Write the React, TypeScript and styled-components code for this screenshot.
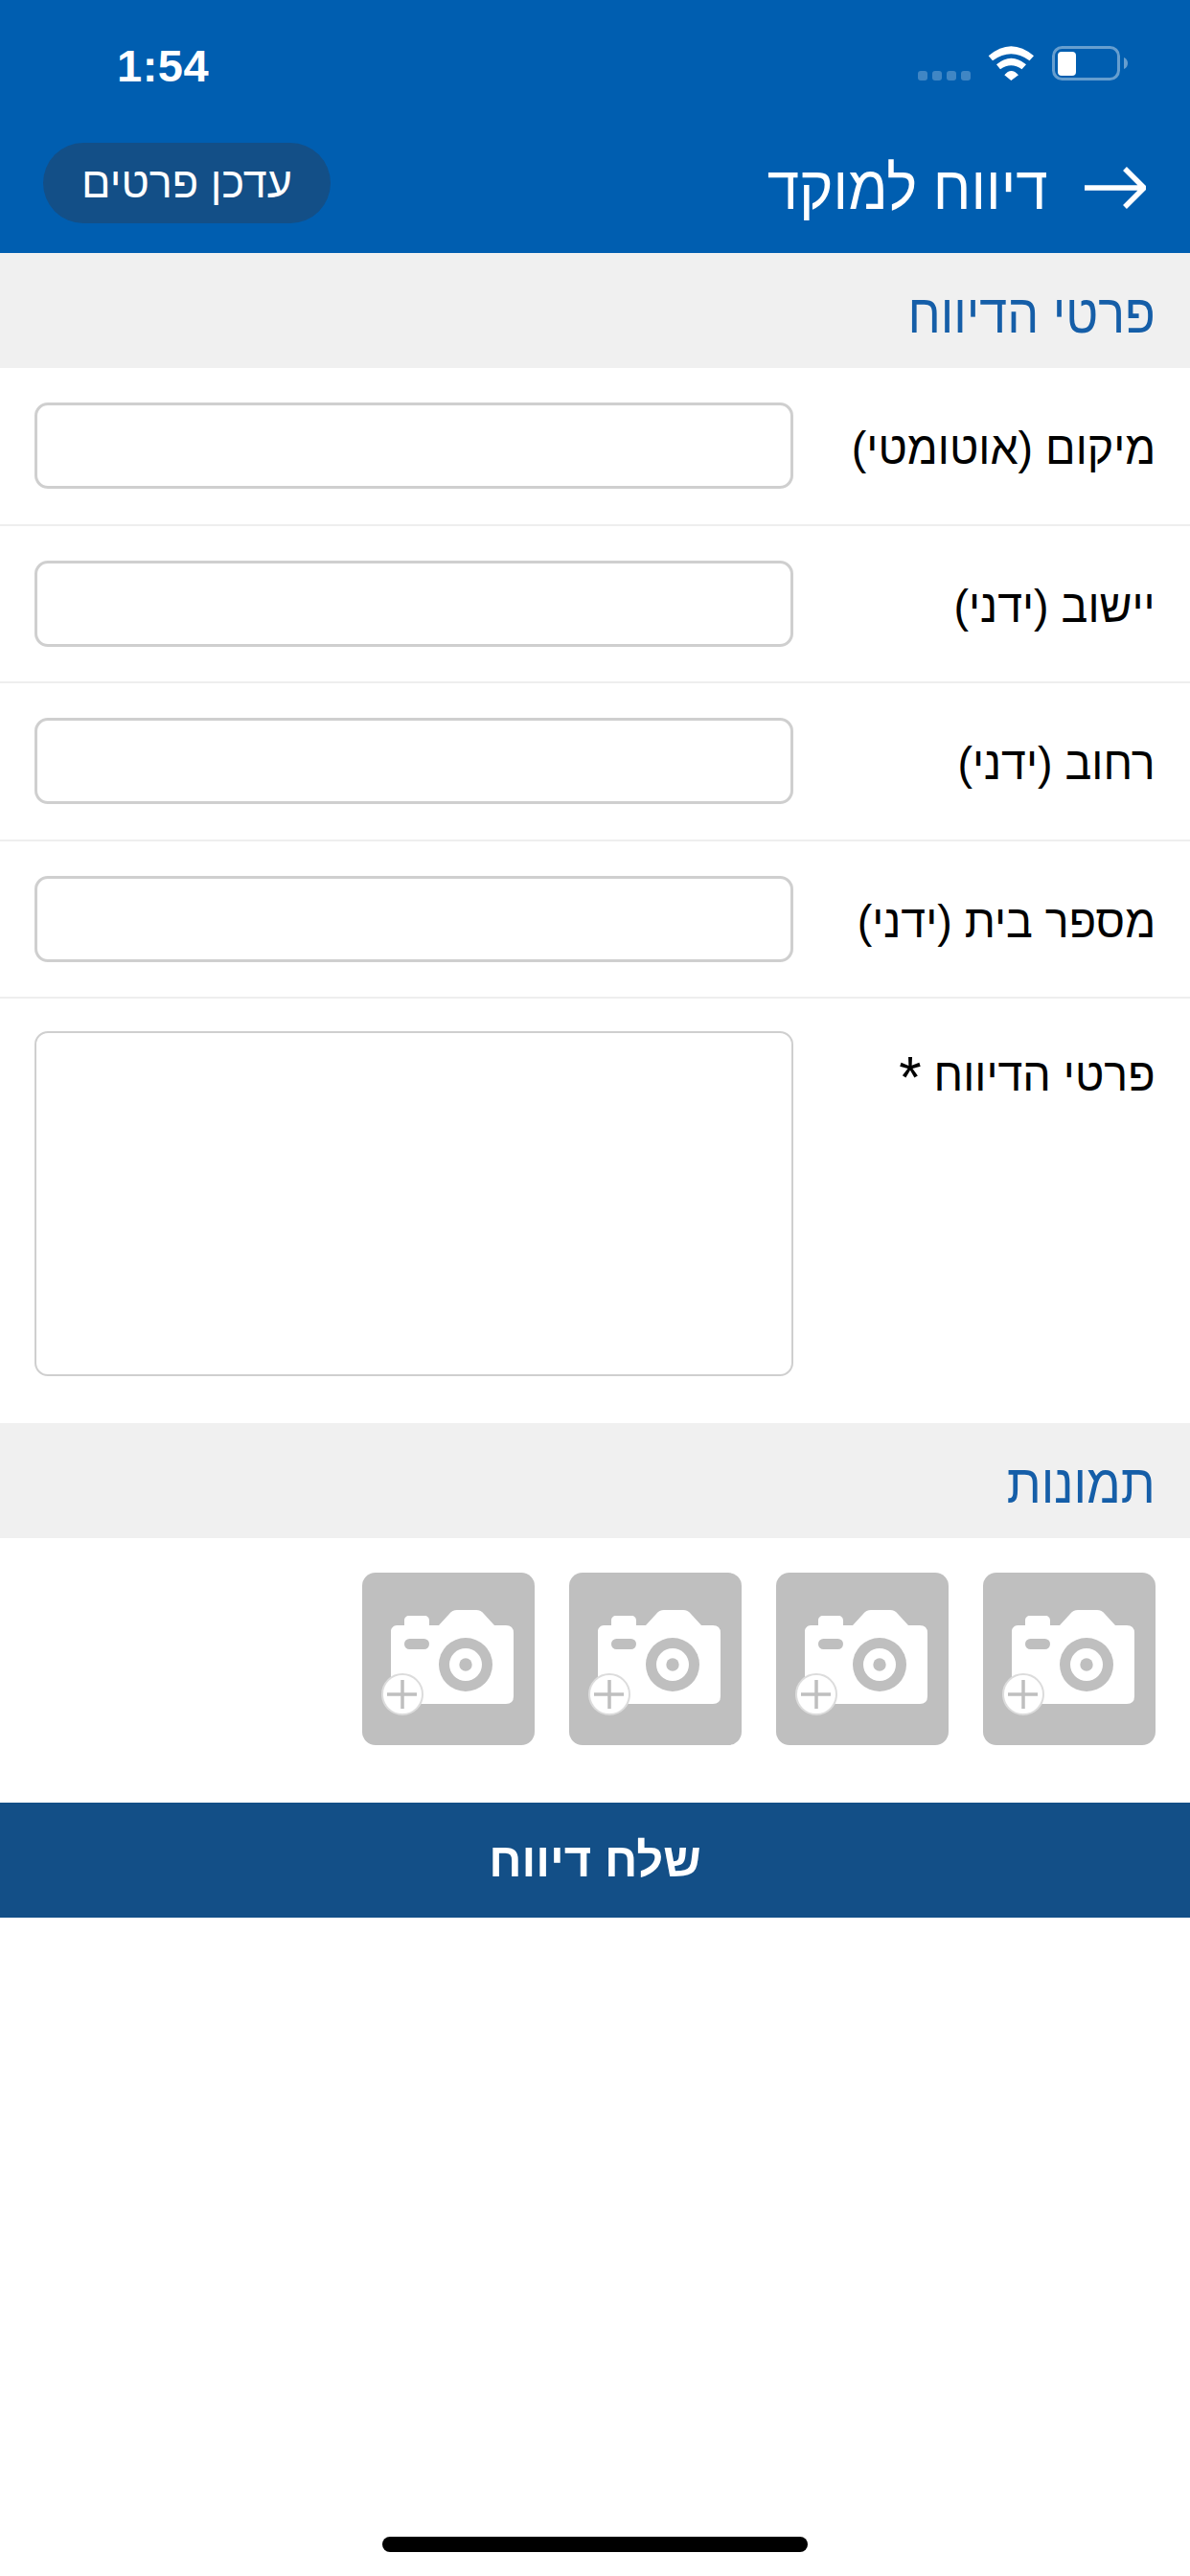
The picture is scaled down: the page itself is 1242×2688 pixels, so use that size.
import React from "react";
import styled, { createGlobalStyle } from "styled-components";

const GlobalStyle = createGlobalStyle`
  html, body {
    margin: 0;
    padding: 0;
    background: #fff;
    font-family: "Liberation Sans", "Noto Sans", sans-serif;
  }
`;

const Page = styled.div`
  position: relative;
  width: 1242px;
  height: 2688px;
  background: #fff;
  overflow: hidden;
`;

const Header = styled.header`
  height: 264px;
  box-sizing: border-box;
  background: #005eb0;
  display: flex;
  flex-direction: column;
`;

const StatusBar = styled.div`
  height: 132px;
  box-sizing: border-box;
  padding: 0 60px 0 122px;
  display: flex;
  align-items: center;
  justify-content: space-between;
  color: #fff;
`;

const Time = styled.div`
  font-size: 47px;
  font-weight: 700;
  letter-spacing: 0.5px;
  margin-top: 4px;
`;

const StatusIcons = styled.div`
  display: flex;
  align-items: center;
`;

const TitleBar = styled.div`
  direction: rtl;
  height: 132px;
  box-sizing: border-box;
  padding: 0 46px 14px 45px;
  display: flex;
  align-items: center;
  justify-content: space-between;
`;

const TitleGroup = styled.div`
  display: flex;
  align-items: center;
  gap: 38px;
  margin-top: 10px;
`;

const Title = styled.h1`
  margin: 0;
  font-size: 64px;
  font-weight: 400;
  color: #fff;
  transform: scaleX(0.94);
  transform-origin: right center;
`;

const UpdateButton = styled.button`
  height: 84px;
  width: 300px;
  border: 0;
  border-radius: 42px;
  background: #134f87;
  color: #fff;
  font-family: inherit;
  font-size: 45px;
  padding: 0;
`;

const SectionHeader = styled.h2`
  direction: rtl;
  margin: 0;
  height: 120px;
  box-sizing: border-box;
  padding: 6px 36px 0;
  display: flex;
  align-items: center;
  background: #f0f0f0;
  color: #155ea8;
  font-size: 56px;
  font-weight: 400;
`;

const SectionText = styled.span`
  transform: scaleX(0.93);
  transform-origin: right center;
`;

const Row = styled.div<{ $tall?: boolean }>`
  direction: rtl;
  box-sizing: border-box;
  padding: ${(p) => (p.$tall ? "34px 36px 48px" : "36px")};
  height: ${(p) => (p.$tall ? "443px" : "164.5px")};
  display: flex;
  justify-content: space-between;
  align-items: ${(p) => (p.$tall ? "flex-start" : "center")};
  border-bottom: ${(p) => (p.$tall ? "0" : "2px solid #eeeeee")};
`;

const Label = styled.label<{ $top?: boolean }>`
  font-size: 48px;
  color: #000;
  line-height: 90px;
  margin-top: ${(p) => (p.$top ? "1px" : "6px")};
  transform: scaleX(0.97);
  transform-origin: right center;
`;

const Required = styled.span`
  font-size: 62px;
  line-height: 0;
  vertical-align: -7px;
`;

const TextInput = styled.div`
  width: 792px;
  height: 90px;
  box-sizing: border-box;
  border: 3px solid #cfcfcf;
  border-radius: 14px;
  background: #fff;
`;

const TextArea = styled(TextInput)`
  height: 360px;
  border-width: 2px;
`;

const Photos = styled.div`
  direction: rtl;
  display: flex;
  gap: 36px;
  padding: 36px;
  height: 276px;
  box-sizing: border-box;
`;

const PhotoTile = styled.div`
  width: 180px;
  height: 180px;
  border-radius: 14px;
  background: #bfbfbf;
  display: flex;
  align-items: center;
  justify-content: center;
`;

const SendButton = styled.button`
  display: block;
  width: 100%;
  height: 120px;
  border: 0;
  background: #134f87;
  color: #fff;
  font-family: inherit;
  font-size: 49px;
  font-weight: 700;
`;

const HomeIndicator = styled.div`
  position: absolute;
  left: 399px;
  bottom: 25px;
  width: 444px;
  height: 16px;
  border-radius: 8px;
  background: #000;
`;

function StatusGlyphs() {
  return (
    <svg width="224" height="42" viewBox="0 0 224 42">
      <g fill="#fff" fillOpacity="0.25">
        <rect x="0" y="29" width="10" height="10" rx="3" />
        <rect x="15" y="29" width="10" height="10" rx="3" />
        <rect x="30" y="29" width="10" height="10" rx="3" />
        <rect x="45" y="29" width="10" height="10" rx="3" />
      </g>
      <path
        fill="#fff"
        d="M73.7 13.3Q97.3 -6.7 121 13.3L116.5 18.3Q97.3 4.3 78 18.3ZM82 22.3Q97.3 9.1 113 22.3L108.5 27.3Q97.3 19.3 86 27.3ZM90.3 33.3Q97.3 24.7 105 33.3L97.3 39Z"
      />
      <rect x="141.5" y="4.5" width="68" height="33" rx="9" fill="none" stroke="#fff" strokeOpacity="0.4" strokeWidth="3" />
      <rect x="146" y="9" width="19" height="25" rx="4" fill="#fff" />
      <path d="M215 15c3 1 4 4 4 6s-1 5-4 6z" fill="#fff" fillOpacity="0.4" />
    </svg>
  );
}

function BackArrow() {
  return (
    <svg width="64" height="46" viewBox="0 0 64 46" fill="none" stroke="#fff" strokeWidth="5.5">
      <path d="M0 23h60M42 3l20 20-20 20" />
    </svg>
  );
}

function CameraPlus() {
  return (
    <svg width="180" height="180" viewBox="0 0 180 180">
      <path
        fill="#fff"
        d="M30 61c0-3 3-6 6-6h8v-5c0-3 2-5 5-5h16c3 0 5 2 5 5v5h10l11-12q3-4 8-4h20q5 0 8 4l11 12h12q8 0 8 8v66q0 8-8 8H38q-8 0-8-8z"
      />
      <rect x="44" y="69" width="26" height="11" rx="5.5" fill="#bfbfbf" />
      <circle cx="108" cy="96" r="28" fill="#bfbfbf" />
      <circle cx="108" cy="96" r="17" fill="#fff" />
      <circle cx="108" cy="96" r="6.7" fill="#bfbfbf" />
      <circle cx="42" cy="127" r="21" fill="#fff" stroke="#dcdcdc" strokeWidth="2" />
      <path d="M42 112v30M26 127h31" stroke="#bfbfbf" strokeWidth="3.5" />
    </svg>
  );
}

const fields = ["מיקום (אוטומטי)", "יישוב (ידני)", "רחוב (ידני)", "מספר בית (ידני)"];

export default function App() {
  return (
    <Page>
      <GlobalStyle />
      <Header>
        <StatusBar>
          <Time>1:54</Time>
          <StatusIcons>
            <StatusGlyphs />
          </StatusIcons>
        </StatusBar>
        <TitleBar>
          <TitleGroup>
            <BackArrow />
            <Title>דיווח למוקד</Title>
          </TitleGroup>
          <UpdateButton>עדכן פרטים</UpdateButton>
        </TitleBar>
      </Header>
      <SectionHeader>
        <SectionText>פרטי הדיווח</SectionText>
      </SectionHeader>
      {fields.map((f) => (
        <Row key={f}>
          <Label>{f}</Label>
          <TextInput />
        </Row>
      ))}
      <Row $tall>
        <Label $top>
          פרטי הדיווח <Required>*</Required>
        </Label>
        <TextArea />
      </Row>
      <SectionHeader>
        <SectionText>תמונות</SectionText>
      </SectionHeader>
      <Photos>
        {[0, 1, 2, 3].map((i) => (
          <PhotoTile key={i}>
            <CameraPlus />
          </PhotoTile>
        ))}
      </Photos>
      <SendButton>שלח דיווח</SendButton>
      <HomeIndicator />
    </Page>
  );
}
